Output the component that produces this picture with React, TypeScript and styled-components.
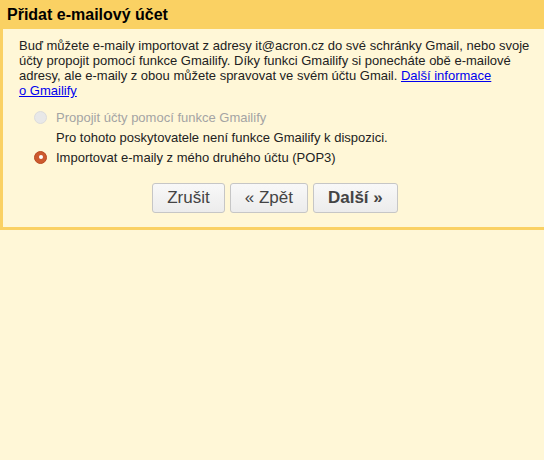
import React from "react";
import styled, { createGlobalStyle } from "styled-components";

const Global = createGlobalStyle`
  html, body { margin: 0; padding: 0; background: #fff7d7; }
  body { font-family: "Liberation Sans", Arial, sans-serif; }
`;

const Page = styled.div`
  width: 544px;
  min-height: 460px;
  background: #fff7d7;
`;

const Header = styled.div`
  height: 29px;
  background: #fad163;
  display: flex;
  align-items: center;
  padding: 0 7px;
  box-sizing: border-box;
`;

const Title = styled.h1`
  margin: 0;
  font-size: 16px;
  font-weight: bold;
  color: #000;
  line-height: 1;
  padding-top: 1px;
`;

const Panel = styled.div`
  border-left: 3px solid #fad163;
  border-bottom: 3px solid #fad163;
  background: #fff7d7;
  padding: 9px 8px 14px 16px;
`;

const Intro = styled.p`
  margin: 0;
  font-size: 13px;
  line-height: 15px;
  color: #222;
`;

const Link = styled.a`
  color: #0000ee;
  text-decoration: underline;
`;

const Options = styled.div`
  display: flex;
  flex-direction: column;
  margin-top: 9px;
`;

const OptionRow = styled.label<{ $disabled?: boolean }>`
  display: flex;
  align-items: center;
  height: 20px;
  font-size: 13px;
  color: ${(p) => (p.$disabled ? "#a4a4a4" : "#222")};
`;

const RadioSlot = styled.span`
  width: 37px;
  display: flex;
  justify-content: center;
  padding-left: 6px;
  box-sizing: border-box;
`;

const Radio = styled.span<{ $checked?: boolean }>`
  width: 13px;
  height: 13px;
  border-radius: 50%;
  box-sizing: border-box;
  display: flex;
  align-items: center;
  justify-content: center;
  background: ${(p) => (p.$checked ? "#cd5a2e" : "#e8e8e8")};
  border: 1px solid ${(p) => (p.$checked ? "#b94a22" : "#dcdcdc")};
  &::after {
    content: "";
    display: ${(p) => (p.$checked ? "block" : "none")};
    width: 4px;
    height: 4px;
    border-radius: 50%;
    background: #fff;
  }
`;

const Note = styled.div`
  height: 20px;
  display: flex;
  align-items: center;
  padding-left: 37px;
  font-size: 13px;
  color: #222;
`;

const Buttons = styled.div`
  display: flex;
  justify-content: center;
  gap: 5px;
  margin-top: 16px;
  padding-right: 5px;
`;

const Button = styled.button<{ $primary?: boolean }>`
  height: 30px;
  padding: 0 14px;
  font-family: "Liberation Sans", Arial, sans-serif;
  font-size: 17px;
  font-weight: ${(p) => (p.$primary ? "bold" : "normal")};
  color: #444;
  background: linear-gradient(#f8f8f8, #ececec);
  border: 1px solid #c6c6c6;
  border-radius: 3px;
  cursor: pointer;
`;

export default function App() {
  return (
    <Page>
      <Global />
      <Header>
        <Title>Přidat e-mailový účet</Title>
      </Header>
      <Panel>
        <Intro>
          Buď můžete e-maily importovat z adresy it@acron.cz do své schránky Gmail, nebo svoje účty
          propojit pomocí funkce Gmailify. Díky funkci Gmailify si ponecháte obě e-mailové adresy, ale
          e-maily z obou můžete spravovat ve svém účtu Gmail.{" "}
          <Link href="#">Další informace o&nbsp;Gmailify</Link>
        </Intro>
        <Options>
          <OptionRow $disabled>
            <RadioSlot>
              <Radio />
            </RadioSlot>
            Propojit účty pomocí funkce Gmailify
          </OptionRow>
          <Note>Pro tohoto poskytovatele není funkce Gmailify k dispozici.</Note>
          <OptionRow>
            <RadioSlot>
              <Radio $checked />
            </RadioSlot>
            Importovat e-maily z mého druhého účtu (POP3)
          </OptionRow>
        </Options>
        <Buttons>
          <Button>Zrušit</Button>
          <Button>« Zpět</Button>
          <Button $primary>Další »</Button>
        </Buttons>
      </Panel>
    </Page>
  );
}
